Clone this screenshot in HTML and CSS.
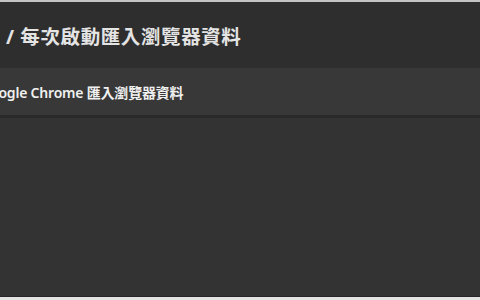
FILE: index.html
```html
<!DOCTYPE html>
<html lang="zh-Hant">
<head>
<meta charset="utf-8">
<link rel="stylesheet" href="styles.css">
</head>
<body>
<div class="frame">
  <header class="header">
    <h1 class="title">/ 每次啟動匯入瀏覽器資料</h1>
  </header>
  <div class="row">
    <span class="row-text">Google Chrome 匯入瀏覽器資料</span>
  </div>
  <main class="content"></main>
</div>
</body>
</html>
```
FILE: styles.css
```css
html, body {
  margin: 0;
  padding: 0;
  width: 480px;
  height: 300px;
  overflow: hidden;
  background: #e6e6e6;
}
.frame {
  box-sizing: border-box;
  height: 300px;
  display: flex;
  flex-direction: column;
  border-top: 2px solid #c4c4c4;
  border-bottom: 3px solid #e4e4e4;
  background: #333333;
  font-family: "Noto Sans", "Noto Sans CJK TC", sans-serif;
  overflow: hidden;
}
.header {
  height: 66px;
  display: flex;
  align-items: center;
  background: #2e2e2e;
  padding-left: 6px;
}
.title {
  margin: 0;
  font-size: 19.5px;
  font-weight: 700;
  color: #e4e4e4;
  letter-spacing: 0.6px;
  white-space: nowrap;
}
.row {
  height: 47px;
  display: flex;
  align-items: center;
  background: #383838;
  border-bottom: 3px solid #2a2a2a;
  overflow: hidden;
}
.row-text {
  margin-left: -20px;
  font-size: 14px;
  font-weight: 600;
  color: #f0f0f0;
  letter-spacing: -0.2px;
  white-space: nowrap;
}
.content {
  flex: 1;
  background: #333333;
  border-bottom: 1px solid #262626;
}
```
